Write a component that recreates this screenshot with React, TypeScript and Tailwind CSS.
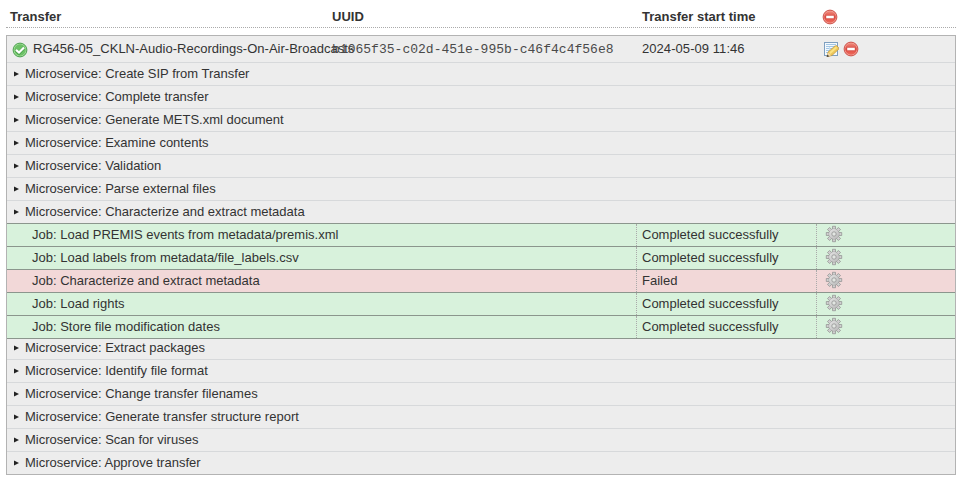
type Job = { name: string; status: string; failed?: boolean };

const before = [
  'Create SIP from Transfer',
  'Complete transfer',
  'Generate METS.xml document',
  'Examine contents',
  'Validation',
  'Parse external files',
  'Characterize and extract metadata',
];

const jobs: Job[] = [
  { name: 'Load PREMIS events from metadata/premis.xml', status: 'Completed successfully' },
  { name: 'Load labels from metadata/file_labels.csv', status: 'Completed successfully' },
  { name: 'Characterize and extract metadata', status: 'Failed', failed: true },
  { name: 'Load rights', status: 'Completed successfully' },
  { name: 'Store file modification dates', status: 'Completed successfully' },
];

const after = [
  'Extract packages',
  'Identify file format',
  'Change transfer filenames',
  'Generate transfer structure report',
  'Scan for viruses',
  'Approve transfer',
];

function RemoveIcon({ className = '' }: { className?: string }) {
  return (
    <svg width="16" height="16" viewBox="0 0 16 16" className={`shrink-0 ${className}`}>
      <defs>
        <linearGradient id="red" x1="0" y1="0" x2="0" y2="1">
          <stop offset="0" stopColor="#f08a7c" />
          <stop offset="0.5" stopColor="#dd4a42" />
          <stop offset="1" stopColor="#ee6a5c" />
        </linearGradient>
      </defs>
      <circle cx="8" cy="8" r="6.9" fill="#f0a096" stroke="#c9473f" strokeWidth="0.9" />
      <circle cx="8" cy="8" r="5.8" fill="url(#red)" />
      <rect x="4" y="6.5" width="8" height="3" rx="0.4" fill="#fff" stroke="#c8423a" strokeWidth="0.4" />
    </svg>
  );
}

function AcceptIcon() {
  return (
    <svg width="16" height="16" viewBox="0 0 16 16" className="mt-[6px] shrink-0">
      <circle cx="8" cy="8" r="6.9" fill="#a5dc9b" stroke="#3f9a45" strokeWidth="0.9" />
      <circle cx="8" cy="8" r="5.7" fill="#6cc166" />
      <path d="M3.8 8.1 7 11 12 5.6" fill="none" stroke="#45a047" strokeWidth="3.2" />
      <path d="M4 7.9 7 10.6 12 5.5" fill="none" stroke="#fff" strokeWidth="2.2" />
    </svg>
  );
}

function EditIcon() {
  return (
    <svg width="16" height="16" viewBox="0 0 16 16" className="mt-[5px] shrink-0">
      <rect x="1.5" y="1.5" width="13" height="13" fill="#f4f9fd" stroke="#7f9fbf" />
      <path d="M3 3.5h10M3 5.5h10M3 7.5h3M3 9.5h3M3 11.5h3M7 7.5h5M7 9.5h3" stroke="#a2c6e5" />
      <path d="M6.5 6v7" stroke="#c8dff0" />
      <path d="m5 11 6.900-6 1.700-.4 2.200 2.200-.3 1.600-6.500 6.100-4.900 1.300z" fill="#edc65b" stroke="#b58c37" strokeWidth="0.6" />
      <path d="m6.800 12.200 6.700-6" stroke="#fbe382" strokeWidth="1.900" />
      <path d="m5 11.500 3 2.700-3.900 1.500z" fill="#f1d8ac" />
      <path d="m4.500 13.700 1.800 1.500-2.700.8z" fill="#333" />
    </svg>
  );
}

function GearIcon() {
  return (
    <svg width="18" height="18" viewBox="0 0 18 18" className="ml-[8px] mt-px shrink-0">
      <defs>
        <linearGradient id="steel" x1="0" y1="0" x2="1" y2="1">
          <stop offset="0" stopColor="#e4e4e4" />
          <stop offset="1" stopColor="#b8b8b8" />
        </linearGradient>
      </defs>
      <g fill="#cfcfcf" stroke="#8e8e8e" strokeWidth="0.7" strokeLinejoin="round">
        {[0, 45, 90, 135, 180, 225, 270, 315].map((a) => (
          <path key={a} d="M7.500 4.800V1.300h3v3.500z" transform={`rotate(${a} 9 9)`} />
        ))}
        <circle cx="9" cy="9" r="5" />
      </g>
      <circle cx="9" cy="9" r="4.900" fill="url(#steel)" />
      <circle cx="9" cy="9" r="2.200" fill="#e2e6e2" stroke="#9a9a9a" strokeWidth="0.9" />
    </svg>
  );
}

function Microservice({ name, size }: { name: string; size: string }) {
  return (
    <div className={`flex items-end ${size}`}>
      <svg width="5" height="6" viewBox="0 0 5 6" className="mb-[8px] ml-[7px] mr-[6px] shrink-0">
        <path d="M0 .5 5 3 0 5.500z" fill="#222" />
      </svg>
      <span className="mb-px leading-[20px]">Microservice: {name}</span>
    </div>
  );
}

export default function App() {
  return (
    <div className="h-[483px] w-[964px] overflow-hidden bg-white pl-[6px] pr-[8px] font-['Liberation_Sans',Arial,sans-serif] text-[13px] text-[#333]">
      <div className="flex h-[28px] border-b border-dotted border-[#aaa] pl-[4px] pt-[7px] font-bold leading-[20px]">
        <span className="w-[322px]">Transfer</span>
        <span className="w-[310px]">UUID</span>
        <span className="w-[180px]">Transfer start time</span>
        <RemoveIcon className="mt-[2px]" />
      </div>
      <div className="mt-[7px] border border-[#b3b3b3] bg-[#ededed]">
        <div className="flex h-[27px] border-b border-[#d7d9db] pl-[5px] leading-[20px]">
          <AcceptIcon />
          <span className="ml-[5px] w-[299px] shrink-0 whitespace-nowrap pt-[3px] tracking-[0.01px]">RG456-05_CKLN-Audio-Recordings-On-Air-Broadcasts</span>
          <span className="w-[310px] shrink-0 pt-[4px] font-['Liberation_Mono','Courier_New',monospace] tracking-[0.02px] text-[#4a4a4a]">b1065f35-c02d-451e-995b-c46f4c4f56e8</span>
          <span className="w-[181px] shrink-0 pt-[3px] tracking-[0.06px]">2024-05-09 11:46</span>
          <EditIcon />
          <RemoveIcon className="ml-[4px] mt-[5px]" />
        </div>
        {before.map((name, i) => (
          <Microservice
            key={name}
            name={name}
            size={i === before.length - 1 ? 'h-[23px] border-b border-[#8b968d]' : 'h-[23px] border-b border-[#d7d9db]'}
          />
        ))}
        {jobs.map((job) => (
          <div key={job.name} className={`flex h-[23px] border-b border-[#8b968d] leading-[20px] ${job.failed ? 'bg-[#f2d8d8]' : 'bg-[#d8f2dc]'}`}>
            <span className="w-[629px] pl-[25px] pt-px">Job: {job.name}</span>
            <span className="w-[180px] border-l border-dotted border-[#aaa] pl-[5px] pt-px">{job.status}</span>
            <span className="border-l border-dotted border-[#aaa]">
              <GearIcon />
            </span>
          </div>
        ))}
        {after.map((name, i) => (
          <Microservice
            key={name}
            name={name}
            size={i === 0 ? 'h-[21px] border-b border-[#d7d9db]' : i === after.length - 1 ? 'h-[22px]' : 'h-[23px] border-b border-[#d7d9db]'}
          />
        ))}
      </div>
    </div>
  );
}
